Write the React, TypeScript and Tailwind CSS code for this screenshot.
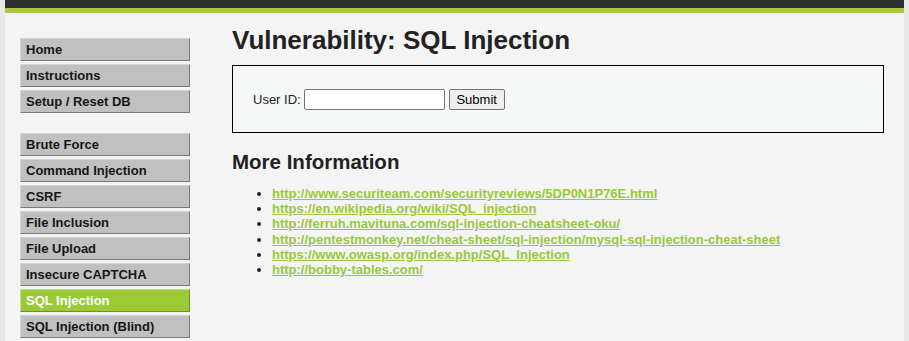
const topMenu = ['Home', 'Instructions', 'Setup / Reset DB'];
const vulnMenu = [
  'Brute Force',
  'Command Injection',
  'CSRF',
  'File Inclusion',
  'File Upload',
  'Insecure CAPTCHA',
  'SQL Injection',
  'SQL Injection (Blind)',
];

const links = [
  'http://www.securiteam.com/securityreviews/5DP0N1P76E.html',
  'https://en.wikipedia.org/wiki/SQL_injection',
  'http://ferruh.mavituna.com/sql-injection-cheatsheet-oku/',
  'http://pentestmonkey.net/cheat-sheet/sql-injection/mysql-sql-injection-cheat-sheet',
  'https://www.owasp.org/index.php/SQL_Injection',
  'http://bobby-tables.com/',
];

const MenuItem = ({ label, active }: { label: string; active?: boolean }) => (
  <li>
    <a
      href="#"
      className={
        active
          ? 'block h-[23px] leading-[21px] pl-[5px] border border-t-[#c3dc8a] border-l-[#c3dc8a] border-r-[#6f8f2a] border-b-[#6f8f2a] bg-[#9acb34] text-white font-bold text-[13px]'
          : 'block h-[23px] leading-[21px] pl-[5px] border border-t-[#d4d4d4] border-l-[#d4d4d4] border-r-[#7a7a7a] border-b-[#7a7a7a] bg-[#c0c0c0] text-[#161616] font-bold text-[13px]'
      }
    >
      {label}
    </a>
  </li>
);

export default function App() {
  return (
    <div className="h-[341px] overflow-hidden bg-[#e8e8e8] px-[5px] font-['Liberation_Sans',Arial,sans-serif] text-[13px] text-[#1a1a1a]">
      <div className="h-full bg-[#f4f4f4] w-[899px]">
        <div className="h-[8px] bg-[#2f2f2f]" />
        <div className="h-[5px] bg-[#a6c93b]" />
        <div className="flex">
          <div className="w-[185px] pl-[15px] pt-[25px] shrink-0">
            <ul className="flex flex-col gap-[3px]">
              {topMenu.map((m) => (
                <MenuItem key={m} label={m} />
              ))}
            </ul>
            <ul className="flex flex-col gap-[3px] mt-[20px]">
              {vulnMenu.map((m) => (
                <MenuItem key={m} label={m} active={m === 'SQL Injection'} />
              ))}
            </ul>
          </div>
          <div className="pl-[42px] w-[694px]">
            <h1 className="text-[26px] font-bold leading-[30px] mt-[12px] text-[#222]">
              Vulnerability: SQL Injection
            </h1>
            <div className="mt-[10px] h-[68px] border border-black bg-[#f6f7f7] flex items-center pl-[20px] pt-[1px]">
              <form className="flex items-center gap-[3px]" onSubmit={(e) => e.preventDefault()}>
                <label className="text-[13px] text-[#222]">User ID:</label>
                <input
                  type="text"
                  className="w-[141px] h-[21px] border border-[#767676] rounded-[2px] bg-white"
                />
                <button
                  type="submit"
                  className="ml-[1px] h-[21px] w-[56px] border border-[#767676] rounded-[2px] bg-[#efefef] text-[13px] text-black leading-none"
                >
                  Submit
                </button>
              </form>
            </div>
            <h2 className="text-[20.5px] font-bold mt-[16px] leading-[25px] text-[#222]">
              More Information
            </h2>
            <ul className="mt-[12px] pl-[40px] list-disc text-[13px] leading-[15.2px] marker:text-[#222]">
              {links.map((l) => (
                <li key={l}>
                  <a href="#" className="font-bold text-[#98c83c] underline">
                    {l}
                  </a>
                </li>
              ))}
            </ul>
          </div>
        </div>
      </div>
    </div>
  );
}
